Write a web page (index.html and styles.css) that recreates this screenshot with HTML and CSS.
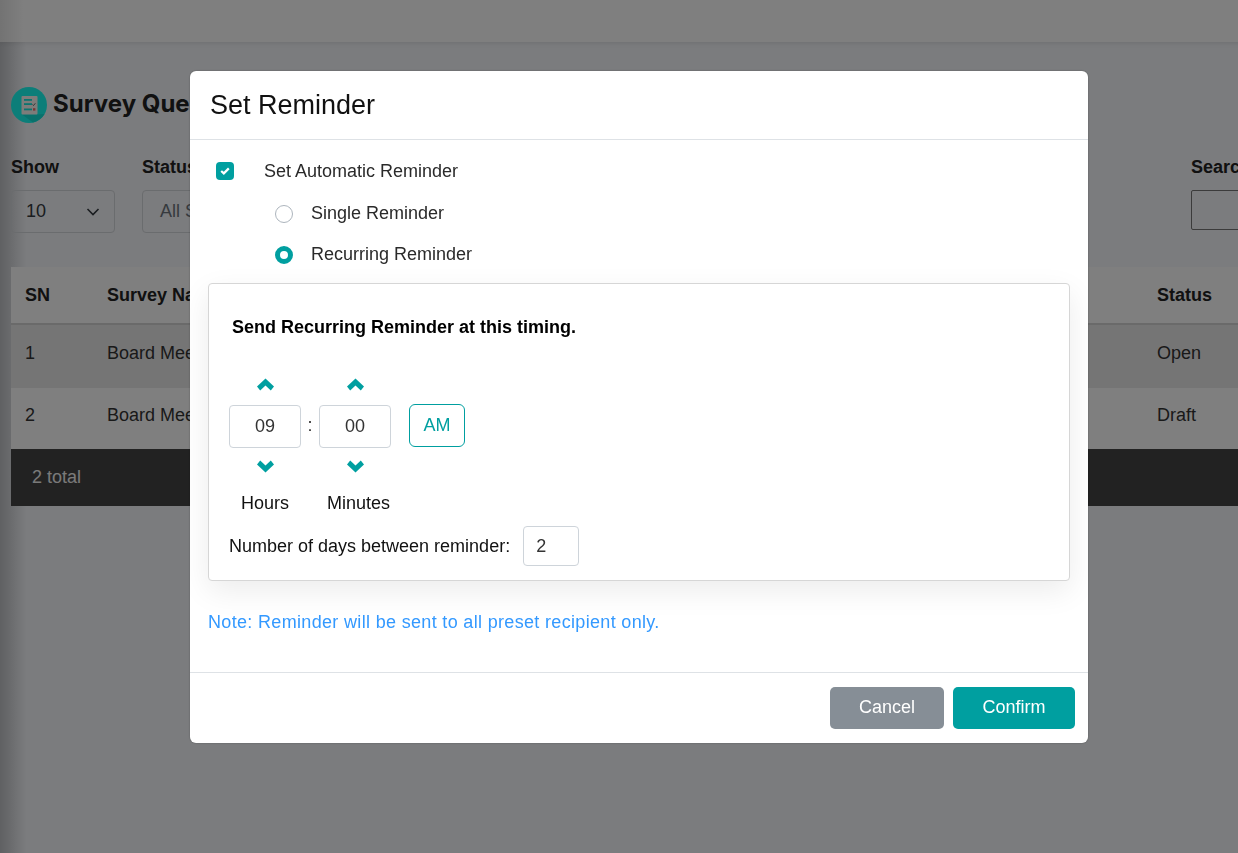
FILE: index.html
```html
<!DOCTYPE html>
<html lang="en">
<head>
<meta charset="utf-8">
<title>Survey Questions</title>
<link rel="stylesheet" href="styles.css">
</head>
<body>
<div class="page">
  <header class="topbar"></header>
  <main class="content">
    <div class="title-row">
      <svg class="title-icon" viewBox="0 0 36 36" width="36" height="36" aria-hidden="true">
        <circle cx="18" cy="18" r="18" fill="#18fdf2"/>
        <path d="M26 27.5 33.5 27A18 18 0 0 1 22 35.5L11 27.5Z" fill="#14e2d8"/>
        <rect x="10.5" y="9" width="16" height="18.5" rx="1" fill="#fdf8f4"/>
        <rect x="13" y="12" width="8" height="1.8" fill="#18e8de"/>
        <rect x="13" y="16.2" width="8" height="1.8" fill="#18e8de"/>
        <path d="M21.5 17.5l1 1 1.8-2.2" fill="none" stroke="#444" stroke-width=".8"/>
        <rect x="13" y="21.5" width="8" height="1.8" fill="#18e8de"/>
        <rect x="22" y="21.2" width="2.4" height="2.4" fill="#f06a68"/>
      </svg>
      <h1 class="page-title">Survey Questions</h1>
    </div>
    <div class="filters">
      <div class="filter filter-show">
        <label class="filter-label">Show</label>
        <div class="select select-show"><span>10</span>
          <svg class="select-chevron" viewBox="0 0 14 8" width="14" height="8" aria-hidden="true"><path d="M1.5 1 7 6.5 12.5 1" fill="none" stroke="#343a40" stroke-width="1.6"/></svg>
        </div>
      </div>
      <div class="filter filter-status">
        <label class="filter-label">Status</label>
        <div class="select select-status"><span class="muted">All Status</span></div>
      </div>
      <div class="filter filter-search">
        <label class="filter-label">Search</label>
        <div class="search-box"></div>
      </div>
    </div>
    <table class="grid">
      <thead>
        <tr><th class="col-sn">SN</th><th class="col-name">Survey Name</th><th class="col-gap"></th><th class="col-status">Status</th></tr>
      </thead>
      <tbody>
        <tr class="odd"><td>1</td><td>Board Meeting</td><td></td><td>Open</td></tr>
        <tr class="even"><td>2</td><td>Board Meeting</td><td></td><td>Draft</td></tr>
      </tbody>
    </table>
    <div class="table-foot">2 total</div>
  </main>
</div>

<div class="overlay">
  <section class="modal">
    <div class="modal-head"><h2 class="modal-title">Set Reminder</h2></div>
    <div class="modal-body">
      <div class="row-check">
        <span class="checkbox">
          <svg viewBox="0 0 10 8" width="10" height="8" aria-hidden="true"><path d="M1.2 4l2.6 2.4L8.8 1.4" fill="none" stroke="#fff" stroke-width="2.2"/></svg>
        </span>
        <span class="row-label">Set Automatic Reminder</span>
      </div>
      <div class="row-radio"><span class="radio"></span><span class="row-label">Single Reminder</span></div>
      <div class="row-radio"><span class="radio radio-on"></span><span class="row-label">Recurring Reminder</span></div>

      <div class="card">
        <h3 class="card-title">Send Recurring Reminder at this timing.</h3>
        <div class="time">
          <div class="time-col">
            <svg class="chev" viewBox="0 0 17 13" width="17" height="13" aria-hidden="true"><path d="M8.5 0.5 17 8.5 13.8 12.5 8.5 7.5 3.2 12.5 0 8.5Z" fill="#009fa0"/></svg>
            <div class="time-box">09</div>
            <svg class="chev" viewBox="0 0 17 13" width="17" height="13" aria-hidden="true"><path d="M8.5 12.5 17 4.5 13.8 0.5 8.5 5.5 3.2 0.5 0 4.5Z" fill="#009fa0"/></svg>
          </div>
          <span class="time-sep">:</span>
          <div class="time-col">
            <svg class="chev" viewBox="0 0 17 13" width="17" height="13" aria-hidden="true"><path d="M8.5 0.5 17 8.5 13.8 12.5 8.5 7.5 3.2 12.5 0 8.5Z" fill="#009fa0"/></svg>
            <div class="time-box">00</div>
            <svg class="chev" viewBox="0 0 17 13" width="17" height="13" aria-hidden="true"><path d="M8.5 12.5 17 4.5 13.8 0.5 8.5 5.5 3.2 0.5 0 4.5Z" fill="#009fa0"/></svg>
          </div>
          <div class="ampm">AM</div>
        </div>
        <div class="time-labels"><span class="lab-hours">Hours</span><span class="lab-mins">Minutes</span></div>
        <div class="days">
          <span class="days-label">Number of days between reminder:</span>
          <div class="days-box">2</div>
        </div>
      </div>

      <p class="note">Note: Reminder will be sent to all preset recipient only.</p>
    </div>
    <div class="modal-foot">
      <button class="btn btn-cancel" type="button">Cancel</button>
      <button class="btn btn-confirm" type="button">Confirm</button>
    </div>
  </section>
</div>
</body>
</html>
```

FILE: styles.css
```css
* { box-sizing: border-box; }
html, body { margin: 0; height: 100%; overflow: hidden; }
body { font-family: "Liberation Sans", Arial, sans-serif; font-size: 18px; color: #212529; background: #f6f8fc; }

.page { width: 1300px; height: 853px; }
.topbar { position: relative; height: 42px; background: linear-gradient(to right, #e6e6e6, #fff 24px); box-shadow: 0 1px 5px rgba(0,0,0,.1); }
.content { height: 811px; padding: 45px 11px 0; background: linear-gradient(to right, #bfc1c5, #f6f8fc 26px); }
.title-row { display: flex; align-items: center; gap: 6px; height: 36px; }
.title-icon { flex: none; }
.page-title { margin: 0 0 4px; font-family: Inter, "Liberation Sans", sans-serif; font-size: 24px; font-weight: 700; color: #222; }

.filters { display: flex; margin-top: 35px; }
.filter { flex: none; }
.filter-label { display: block; font-weight: 700; font-size: 18px; line-height: 18px; color: #222; }
.filter-show { width: 131px; }
.filter-status { width: 1049px; }
.select { height: 43px; margin-top: 14px; border: 1px solid #d5d8dc; border-radius: 4px; display: flex; align-items: center; padding: 0 14px; font-size: 18px; color: #343a40; }
.select-show { width: 104px; justify-content: space-between; }
.select-status { width: 200px; padding: 0 17px; }
.muted { color: #6c757d; }
.search-box { width: 200px; height: 40px; margin-top: 14px; border: 1px solid #767676; border-radius: 2px; }

.grid { width: 1289px; margin-top: 34px; border-collapse: separate; border-spacing: 0; table-layout: fixed; }
.grid th { height: 58px; text-align: left; padding: 0 14px; font-weight: 700; font-size: 18px; color: #222; background: #fff; border-bottom: 2px solid #d5d5d5; }
.grid td { padding: 0 14px 6px; font-size: 18px; color: #333; background: #fff; }
.grid .odd td { height: 63px; background: #ebebeb; }
.grid .even td { height: 61px; }
.col-sn { width: 82px; }
.col-name { width: 300px; }
.col-status { width: 157px; }
.table-foot { width: 1289px; height: 57px; padding: 0 21px; display: flex; align-items: center; background: #444; color: #f4f4f4; font-size: 18px; }

.overlay { position: fixed; inset: 0; background: rgba(0,0,0,.5); display: flex; justify-content: flex-start; align-items: flex-start; padding: 71px 0 0 190px; }
.modal { width: 898px; height: 672px; background: #fff; border-radius: 6px; display: flex; flex-direction: column; box-shadow: 0 0 2px rgba(0,0,0,.3); }
.modal-head { height: 69px; padding: 0 20px; display: flex; align-items: center; border-bottom: 1px solid #dee2e6; }
.modal-title { margin: 0; font-size: 27px; font-weight: 400; color: #111; }
.modal-body { flex: 1; padding: 0 18px; }
.row-check { display: flex; align-items: center; height: 31px; margin: 16px 0 6px; }
.checkbox { width: 18px; height: 18px; margin: 0 0 2px 8px; border-radius: 4px; background: #009fa0; display: flex; align-items: center; justify-content: center; }
.row-check .row-label { margin-left: 30px; }
.row-label { font-size: 18px; color: #2a2a2a; }
.row-radio { display: flex; align-items: center; height: 41px; padding-left: 67px; }
.radio { width: 18px; height: 18px; border-radius: 50%; border: 1px solid #adb5bd; background: #fff; margin-right: 18px; }
.radio-on { border: 5.5px solid #009fa0; }

.card { height: 298px; margin-top: 8px; border: 1px solid #d6d6d6; border-radius: 4px; padding: 0 20px; box-shadow: 0 10px 30px rgba(0,0,0,.08); background: #fff; }
.card-title { margin: 33px 0 0 3px; font-size: 18px; line-height: 20px; font-weight: 700; color: #000; }
.time { display: flex; align-items: center; margin-top: 41px; }
.time-col { display: flex; flex-direction: column; align-items: center; }
.chev { display: block; }
.time-box { width: 72px; height: 43px; margin: 14px 0 12px; border: 1px solid #ced4da; border-radius: 4px; display: flex; align-items: center; justify-content: center; font-size: 18px; color: #333; }
.time-sep { width: 18px; text-align: center; font-size: 18px; color: #333; }
.ampm { width: 56px; height: 43px; margin-left: 18px; border: 1px solid #009fa0; border-radius: 6px; display: flex; align-items: center; justify-content: center; font-size: 18px; color: #009fa0; }
.time-labels { margin-top: 18px; height: 24px; line-height: 24px; font-size: 18px; color: #111; }
.lab-hours { margin-left: 12px; }
.lab-mins { margin-left: 38px; }
.days { display: flex; align-items: center; margin-top: 11px; }
.days-label { font-size: 18px; color: #111; }
.days-box { width: 56px; height: 40px; margin-left: 13px; border: 1px solid #ced4da; border-radius: 4px; display: flex; align-items: center; padding-left: 12px; font-size: 18px; color: #333; }
.note { margin: 30px 0 0; font-size: 18px; line-height: 22px; letter-spacing: .33px; color: #3399ff; }

.modal-foot { height: 71px; border-top: 1px solid #dee2e6; display: flex; justify-content: flex-end; align-items: center; gap: 9px; padding: 0 13px; }
.btn { height: 42px; border: 0; border-radius: 5px; padding: 0 0 2px; font: 400 18px "Liberation Sans", Arial, sans-serif; color: #fff; }
.btn-cancel { width: 114px; background: #868e96; }
.btn-confirm { width: 122px; background: #009fa0; }
```
